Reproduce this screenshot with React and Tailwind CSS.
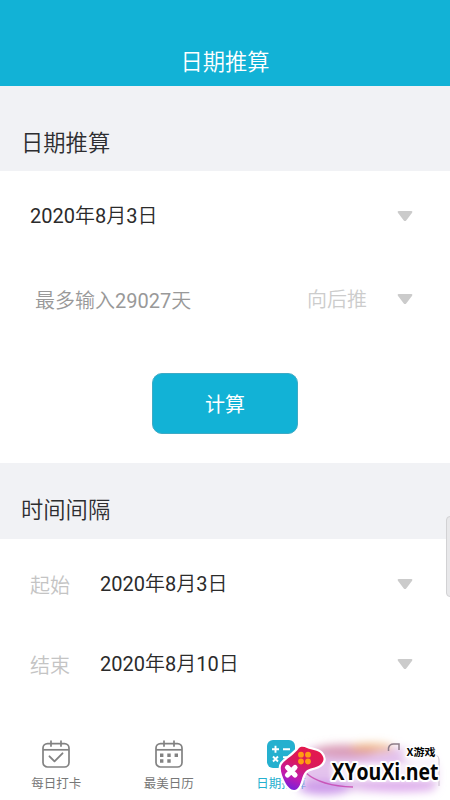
import React from 'react';

function Caret() {
    return (
        <svg className="w-4 h-3 shrink-0" viewBox="0 0 16 12">
            <path d="M1.6 1h12.8q1.6.2.7 1.7L9.4 10.2Q8 12 6.6 10.2L.9 2.7Q0 1.2 1.6 1z" fill="#cbcbcb"/>
        </svg>
    );
}

// digits keep the regular weight, the characters around them are lighter
function MixedText({children}) {
    return children.split(/(\d+)/).map((part, i) =>
        /\d/.test(part) ? <span key={i} className="font-normal">{part}</span> : part
    );
}

function SectionTitle({children, className}) {
    return (
        <h2 className={`bg-[#f1f2f5] pl-[21px] text-[22.3px] leading-8 font-[350] text-[#2d2d30] ${className}`}>
            {children}
        </h2>
    );
}

function IntervalRow({label, date}) {
    return (
        <div className="h-20 pl-[30px] pr-[37px] flex items-center text-xl font-[350]">
            <span className="w-[70px] text-[#c4c4c4] pt-1">{label}</span>
            <span className="flex-1 text-[#2b2b2b]"><MixedText>{date}</MixedText></span>
            <Caret/>
        </div>
    );
}

function CalendarFrame({children}) {
    return (
        <svg className="w-7 h-7" viewBox="0 0 28 28" fill="none" stroke="#828282" strokeWidth="1.7"
             strokeLinecap="round" strokeLinejoin="round">
            <rect x="1" y="3.6" width="26" height="23.4" rx="4.5"/>
            <path d="M1 9.8h26" strokeLinecap="butt"/>
            <path d="M9 1.2v4.9M19 1.2v4.9"/>
            {children}
        </svg>
    );
}

function CheckCalendarIcon() {
    return (
        <CalendarFrame>
            <path d="M7.5 16.3l5 5 8-8" strokeWidth="1.9"/>
        </CalendarFrame>
    );
}

function DotCalendarIcon() {
    return (
        <CalendarFrame>
            <path
                d="M5 13.5h3.4v3.4H5zM12.3 13.5h3.4v3.4h-3.4zM19.6 13.5H23v3.4h-3.4zM5 19.3h3.4v3.4H5zM12.3 19.3h3.4v3.4h-3.4z"
                fill="#828282" stroke="none"/>
        </CalendarFrame>
    );
}

function CalculatorIcon() {
    return (
        <svg className="w-7 h-7" viewBox="0 0 28 28">
            <rect width="28" height="28" rx="6" fill="#25b0cf"/>
            <path d="M5 9.3h7M8.5 5.8v7M16 9.3h7M6 16.5l5 5M11 16.5l-5 5M16 17.2h7M16 21h7" stroke="#fff"
                  strokeWidth="1.9"/>
        </svg>
    );
}

function Tab({icon, label, active}) {
    return (
        <div className="flex-1 flex flex-col items-center">
            {icon}
            <span
                className={`mt-[6px] text-[12.5px] leading-[19px] ${active ? 'text-[#25b0cf]' : 'text-[#777]'}`}>
                {label}
            </span>
        </div>
    );
}

function SiteLogo() {
    return (
        <svg className="absolute left-0 bottom-0 w-[450px] h-20" viewBox="0 720 450 80">
            <defs>
                <filter id="glow" x="-30%" y="-60%" width="160%" height="220%">
                    <feGaussianBlur stdDeviation="4.5"/>
                </filter>
                <filter id="halo" x="-20%" y="-40%" width="140%" height="180%">
                    <feGaussianBlur stdDeviation="2"/>
                </filter>
                <linearGradient id="pad" x1="0.7" y1="0" x2="0.3" y2="1">
                    <stop offset="0" stopColor="#e5184c"/>
                    <stop offset="0.4" stopColor="#d91a5c"/>
                    <stop offset="0.75" stopColor="#c01bb0"/>
                    <stop offset="1" stopColor="#7a20d8"/>
                </linearGradient>
            </defs>
            <g filter="url(#glow)">
                <rect x="303" y="748" width="134" height="43" rx="10" fill="#e3c0ec" opacity="0.95"/>
                <ellipse cx="345" cy="751" rx="32" ry="7" fill="#d68fa8" opacity="0.75"/>
                <ellipse cx="372" cy="748" rx="22" ry="5" fill="#efb27a" opacity="0.75"/>
                <ellipse cx="324" cy="788" rx="26" ry="7" fill="#c48be8" opacity="0.75"/>
                <ellipse cx="398" cy="788" rx="38" ry="4" fill="#dcA0ec" opacity="0.7"/>
                <ellipse cx="422" cy="756" rx="19" ry="12" fill="#fff" opacity="0.85"/>
            </g>
            <path d="M388.500 751v-3q1-4 5-4h5.500v6" fill="none" stroke="#8d7c88" strokeWidth="1.5"/>
            <path d="M433 754q6 1 6 6v26" fill="none" stroke="#b5a5bb" strokeWidth="1" opacity="0.7"/>
            <path d="M306 773q15 13 47 14" fill="none" stroke="#c331a4" strokeWidth="1.500" opacity="0.7"/>
            <g filter="url(#halo)" fill="#fff">
                <rect x="331" y="763" width="107" height="18" rx="4" opacity="0.7"/>
                <rect x="406" y="748" width="31" height="10" rx="3" opacity="0.8"/>
            </g>
            <path
                d="M299 748C301 746 304 746.5 307 748C312 750 318 750 321 753.5C325 758 324 762 320 765C316 768 309 768 306 771C301 776 302 785 297 789C293 792 288 788 285 782C282 776 279 768 282 764C286 759 295 754 299 748z"
                fill="url(#pad)" stroke="#fff" strokeWidth="4.5" paintOrder="stroke" strokeLinejoin="round"/>
            <path d="M287.500 767.500l7.500 7.500M295 767.500l-7.500 7.500" stroke="#fff" strokeWidth="5.200"
                  strokeLinecap="round"/>
            <g fill="#ff9c13">
                <circle cx="301" cy="754.7" r="2.9"/>
                <circle cx="308" cy="754.7" r="2.9"/>
                <circle cx="301" cy="761.5" r="2.9"/>
                <circle cx="308" cy="761.5" r="2.9"/>
            </g>
            <g fill="#050505" stroke="#fff" strokeLinejoin="round" paintOrder="stroke">
                <text x="331.5" y="780" fontSize="23.5" strokeWidth="4" textLength="107"
                      lengthAdjust="spacingAndGlyphs" className="font-['Open_Sans',sans-serif] font-bold">XYouXi.net
                </text>
                <text x="406.5" y="756" fontSize="10.5" strokeWidth="2.5" textLength="29"
                      lengthAdjust="spacingAndGlyphs"
                      className="font-['Noto_Sans_CJK_SC',sans-serif] font-bold">X游戏
                </text>
            </g>
        </svg>
    );
}

export default function App() {
    return (
        <div
            className="relative w-[450px] h-[800px] overflow-hidden bg-white flex flex-col font-['Roboto','Noto_Sans_CJK_SC',sans-serif]">
            <header
                className="h-[86px] shrink-0 bg-[#12b2d6] pt-[46px] text-center text-[22.3px] leading-8 font-[350] text-white">
                日期推算
            </header>

            <SectionTitle className="h-[85px] pt-[41px]">日期推算</SectionTitle>
            <section className="h-[292px] flex flex-col">
                <div
                    className="h-[90px] pl-[30px] pr-[37px] flex items-center justify-between text-xl font-[350] text-[#2b2b2b]">
                    <span><MixedText>2020年8月3日</MixedText></span>
                    <Caret/>
                </div>
                <div className="h-[76px] pl-[35px] pr-[37px] flex items-center text-xl font-[350]">
                    <span className="flex-1 text-[#999] pt-1"><MixedText>最多输入29027天</MixedText></span>
                    <span className="mr-[30px] pt-0.5 text-[#ccc]">向后推</span>
                    <Caret/>
                </div>
                <button
                    className="mt-9 mx-auto w-[146px] h-[61px] pt-0.5 rounded-[10px] border border-[#3eaac5] bg-[#12b2d6] text-xl font-normal text-white">
                    计算
                </button>
            </section>

            <SectionTitle className="h-[76px] pt-[31px]">时间间隔</SectionTitle>
            <section className="pt-[5px] flex-1">
                <IntervalRow label="起始" date="2020年8月3日"/>
                <IntervalRow label="结束" date="2020年8月10日"/>
            </section>

            <nav className="h-[60px] flex">
                <Tab icon={<CheckCalendarIcon/>} label="每日打卡"/>
                <Tab icon={<DotCalendarIcon/>} label="最美日历"/>
                <Tab icon={<CalculatorIcon/>} label="日期推算" active/>
                <div className="flex-1"/>
            </nav>

            {/* edge panel handle */}
            <div
                className="absolute left-[446px] top-[516px] w-2 h-[81px] rounded-[4px] border border-[#d2d2d4] bg-[#e8e8ea]"/>
            <SiteLogo/>
        </div>
    );
}
